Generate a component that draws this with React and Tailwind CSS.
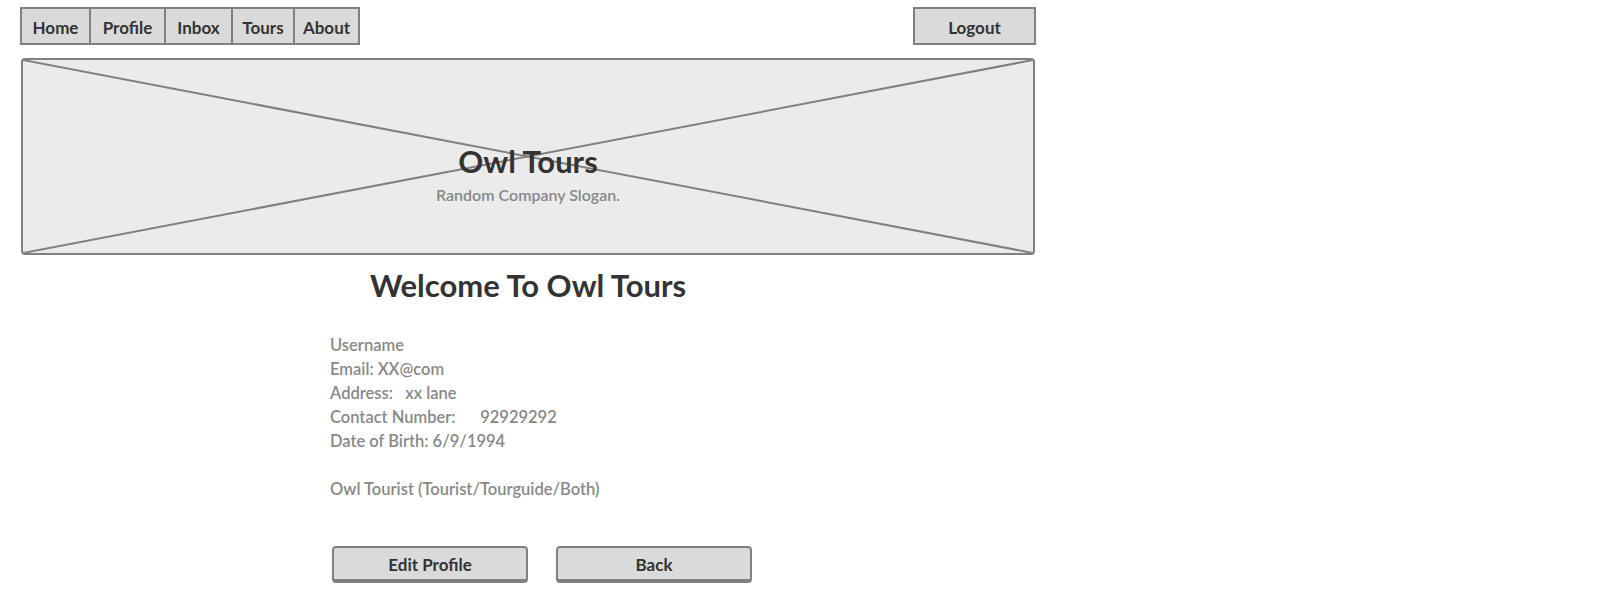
import React from "react";

const navItems = [
    { label: "Home", w: "w-[67px]" },
    { label: "Profile", w: "w-[75px]" },
    { label: "Inbox", w: "w-[67px]" },
    { label: "Tours", w: "w-[62px]" },
    { label: "About", w: "w-[65px]" },
];

const font = { fontFamily: "Lato, 'Open Sans', sans-serif" };

export default function App() {
    return (
        <div className="bg-white min-h-[603px] pl-5 pt-[7px]" style={font}>
            <div className="w-[1016px]">
                {/* top nav */}
                <div className="flex justify-between items-start">
                    <div className="flex border-2 border-[#808080] bg-[#dadada] h-[38px]">
                        {navItems.map((item, i) => (
                            <div
                                key={item.label}
                                className={`flex items-center justify-center ${item.w} pt-[3px] text-[17px] font-bold text-[#333] ${i > 0 ? "border-l-2 border-[#808080]" : ""}`}
                            >
                                {item.label}
                            </div>
                        ))}
                    </div>
                    <div className="flex items-center justify-center w-[123px] h-[38px] border-2 border-[#808080] bg-[#dadada] pt-[3px] text-[17px] font-bold text-[#333]">
                        Logout
                    </div>
                </div>

                {/* banner */}
                <div className="relative mt-[13px] ml-px w-[1014px] h-[197px] rounded-[4px] border-2 border-[#808080] bg-[#ebebeb] overflow-hidden">
                    <svg className="absolute inset-0 w-full h-full" viewBox="0 0 1010 193" preserveAspectRatio="none">
                        <line x1="0" y1="0" x2="1010" y2="193" stroke="#808080" strokeWidth="2" />
                        <line x1="1010" y1="0" x2="0" y2="193" stroke="#808080" strokeWidth="2" />
                    </svg>
                    <div className="relative flex flex-col items-center pt-[84px]">
                        <div className="text-[31px] font-bold leading-[34px] text-[#333]">Owl Tours</div>
                        <div className="mt-[5px] text-[16px] font-semibold text-[#888]">Random Company Slogan.</div>
                    </div>
                </div>

                {/* welcome */}
                <h1 className="mt-[12px] text-center text-[31px] font-bold leading-[36px] text-[#333]">
                    Welcome To Owl Tours
                </h1>

                {/* profile details */}
                <div className="mt-[30px] ml-[310px] text-[16.5px] leading-[24px] font-semibold text-[#888]">
                    <div>Username</div>
                    <div>Email: XX@com</div>
                    <div>Address:&nbsp;&nbsp;&nbsp;xx lane</div>
                    <div>Contact Number:&nbsp;&nbsp;&nbsp;&nbsp;&nbsp;&nbsp;92929292</div>
                    <div>Date of Birth: 6/9/1994</div>
                    <div className="mt-[24px]">Owl Tourist (Tourist/Tourguide/Both)</div>
                </div>

                {/* actions */}
                <div className="mt-[45px] ml-[312px] flex gap-[28px]">
                    <button className="w-[196px] h-[37px] rounded-[4px] border-2 border-b-4 border-[#808080] bg-[#dadada] pt-[3px] text-[17px] font-bold text-[#333]">
                        Edit Profile
                    </button>
                    <button className="w-[196px] h-[37px] rounded-[4px] border-2 border-b-4 border-[#808080] bg-[#dadada] pt-[3px] text-[17px] font-bold text-[#333]">
                        Back
                    </button>
                </div>
            </div>
        </div>
    );
}
